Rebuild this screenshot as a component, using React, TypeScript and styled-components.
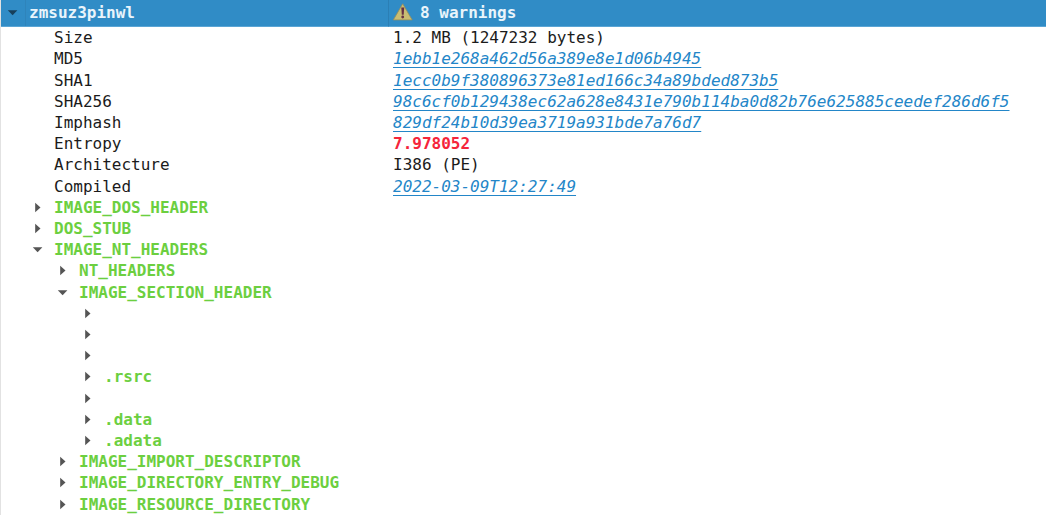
import React, { useState } from "react";
import styled, { createGlobalStyle } from "styled-components";

const GlobalStyle = createGlobalStyle`
  body {
    margin: 0;
    background: #ffffff;
  }
`;

const TreeTable = styled.table`
  width: 100%;
  height: 100vh;
  table-layout: fixed;
  border-collapse: separate;
  border-spacing: 0;
  border-left: 1px solid #e2e2e2;
  font-family: "DejaVu Sans Mono", monospace;
  font-size: 16px;
  line-height: 21px;
  color: #1b1b1b;
  white-space: pre;
`;

const NameColumn = styled.col`
  width: 387px;
`;

const HeaderRow = styled.tr`
  height: 27px;
  background: #308cc6;
  color: #e9f4fb;
`;

const HeaderCell = styled.th`
  box-sizing: border-box;
  height: 27px;
  padding: 0;
  border-bottom: 1px solid #5aa5d5;
  text-align: left;
  font-weight: bold;

  & + & {
    border-left: 1px solid #2b7fb5;
  }
`;

const HeaderContent = styled.div`
  display: flex;
  align-items: center;
  height: 26px;
`;

const Warnings = styled(HeaderContent)`
  gap: 7px;
  padding-left: 4px;
`;

const NameCell = styled.th`
  padding: 0;
  text-align: left;
  font-weight: normal;
`;

const NameContent = styled.div<{ $level: number }>`
  display: flex;
  align-items: center;
  padding-left: ${({ $level }) => $level * 25}px;
`;

const Toggle = styled.button`
  display: flex;
  align-items: center;
  justify-content: center;
  box-sizing: border-box;
  width: 25px;
  height: 21px;
  padding: 0 2px 0 0;
  border: 0;
  background: none;
  color: #555555;
  cursor: pointer;
`;

const RootToggle = styled(Toggle)`
  height: 26px;
  padding: 0 1px 2px 0;
  border-right: 1px solid #2e84bb;
  color: #173f5a;
`;

const Label = styled.span<{ $group?: boolean }>`
  padding-left: ${({ $group }) => ($group ? 3 : 28)}px;
  font-weight: ${({ $group }) => ($group ? "bold" : "normal")};
  color: ${({ $group }) => ($group ? "#6ccf40" : "inherit")};
`;

const HeaderText = styled.span`
  padding-bottom: 2px;
`;

const RootLabel = styled(HeaderText)`
  padding-left: 3px;
`;

const ValueCell = styled.td`
  padding: 0 0 0 5px;
`;

const Link = styled.a`
  font-style: italic;
  color: #2386c8;
  text-decoration: underline;
  text-decoration-thickness: 1px;
  text-underline-offset: 3px;
  text-decoration-skip-ink: none;
`;

const Alert = styled.strong`
  color: #f5253b;
`;

const Arrow = ({ open }: { open: boolean }) => (
  <svg width="11" height="11" viewBox="0 0 11 11" aria-hidden="true">
    <path d={open ? "M.8 3.3H10.4L5.6 8.3Z" : "M3.2 .8L8.5 5.5L3.2 10.2Z"} fill="currentColor" />
  </svg>
);

const WarningIcon = () => (
  <svg width="20" height="20" viewBox="0 0 20 20" aria-hidden="true">
    <path
      d="M9.7 .8 19.2 16.9H.3Z"
      fill="#c9bd72"
      stroke="#958d5c"
      strokeWidth=".8"
      strokeLinejoin="round"
    />
    <path d="M8.3 4.5h2.9l-.5 7.2H8.8Z" fill="#662f43" />
    <circle cx="9.7" cy="14" r="1.4" fill="#662f43" />
  </svg>
);

type Property = { name: string; value: string; kind?: "link" | "alert" };
type Node = { id: string; name: string; level: number; parent?: string };

const properties: Property[] = [
  { name: "Size", value: "1.2 MB (1247232 bytes)" },
  { name: "MD5", value: "1ebb1e268a462d56a389e8e1d06b4945", kind: "link" },
  { name: "SHA1", value: "1ecc0b9f380896373e81ed166c34a89bded873b5", kind: "link" },
  {
    name: "SHA256",
    value: "98c6cf0b129438ec62a628e8431e790b114ba0d82b76e625885ceedef286d6f5",
    kind: "link",
  },
  { name: "Imphash", value: "829df24b10d39ea3719a931bde7a76d7", kind: "link" },
  { name: "Entropy", value: "7.978052", kind: "alert" },
  { name: "Architecture", value: "I386 (PE)" },
  { name: "Compiled", value: "2022-03-09T12:27:49", kind: "link" },
];

const nodes: Node[] = [
  { id: "dos", name: "IMAGE_DOS_HEADER", level: 1 },
  { id: "stub", name: "DOS_STUB", level: 1 },
  { id: "nt", name: "IMAGE_NT_HEADERS", level: 1 },
  { id: "nth", name: "NT_HEADERS", level: 2, parent: "nt" },
  { id: "sections", name: "IMAGE_SECTION_HEADER", level: 2, parent: "nt" },
  { id: "s0", name: "", level: 3, parent: "sections" },
  { id: "s1", name: "", level: 3, parent: "sections" },
  { id: "s2", name: "", level: 3, parent: "sections" },
  { id: "s3", name: ".rsrc", level: 3, parent: "sections" },
  { id: "s4", name: "", level: 3, parent: "sections" },
  { id: "s5", name: ".data", level: 3, parent: "sections" },
  { id: "s6", name: ".adata", level: 3, parent: "sections" },
  { id: "import", name: "IMAGE_IMPORT_DESCRIPTOR", level: 2, parent: "nt" },
  { id: "debug", name: "IMAGE_DIRECTORY_ENTRY_DEBUG", level: 2, parent: "nt" },
  { id: "resource", name: "IMAGE_RESOURCE_DIRECTORY", level: 2, parent: "nt" },
];

const PropertyValue = ({ value, kind }: Property) => {
  if (kind === "link") return <Link href={`#${value}`}>{value}</Link>;
  if (kind === "alert") return <Alert>{value}</Alert>;
  return <>{value}</>;
};

export default function App() {
  const [open, setOpen] = useState<Record<string, boolean>>({
    root: true,
    nt: true,
    sections: true,
  });
  const toggle = (id: string) => setOpen((o) => ({ ...o, [id]: !o[id] }));

  const isVisible = (node: Node): boolean => {
    if (!node.parent) return true;
    const parent = nodes.find((n) => n.id === node.parent);
    return !!open[node.parent] && (!parent || isVisible(parent));
  };

  return (
    <>
      <GlobalStyle />
      <TreeTable>
        <colgroup>
          <NameColumn />
          <col />
        </colgroup>
        <thead>
          <HeaderRow>
            <HeaderCell scope="col">
              <HeaderContent>
                <RootToggle
                  type="button"
                  aria-label="Toggle zmsuz3pinwl"
                  aria-expanded={open.root}
                  onClick={() => toggle("root")}
                >
                  <Arrow open={open.root} />
                </RootToggle>
                <RootLabel>zmsuz3pinwl</RootLabel>
              </HeaderContent>
            </HeaderCell>
            <HeaderCell scope="col">
              <Warnings>
                <WarningIcon />
                <HeaderText>8 warnings</HeaderText>
              </Warnings>
            </HeaderCell>
          </HeaderRow>
        </thead>
        {open.root && (
          <tbody>
            {properties.map((property) => (
              <tr key={property.name}>
                <NameCell scope="row">
                  <NameContent $level={1}>
                    <Label>{property.name}</Label>
                  </NameContent>
                </NameCell>
                <ValueCell>
                  <PropertyValue {...property} />
                </ValueCell>
              </tr>
            ))}
            {nodes.filter(isVisible).map((node) => (
              <tr key={node.id}>
                <NameCell scope="row">
                  <NameContent $level={node.level}>
                    <Toggle
                      type="button"
                      aria-label={`Toggle ${node.name || "unnamed section"}`}
                      aria-expanded={!!open[node.id]}
                      onClick={() => toggle(node.id)}
                    >
                      <Arrow open={!!open[node.id]} />
                    </Toggle>
                    <Label $group>{node.name}</Label>
                  </NameContent>
                </NameCell>
                <ValueCell />
              </tr>
            ))}
          </tbody>
        )}
      </TreeTable>
    </>
  );
}
